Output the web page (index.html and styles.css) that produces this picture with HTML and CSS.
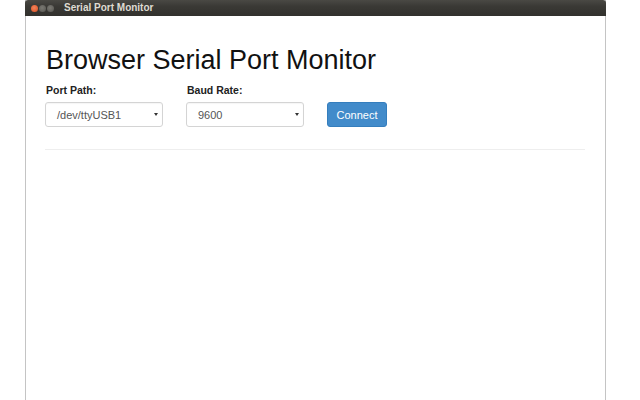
FILE: index.html
```html
<!DOCTYPE html>
<html>
<head>
<meta charset="utf-8">
<link rel="stylesheet" href="styles.css">
</head>
<body>
<div class="window">
  <div class="titlebar">
    <span class="dot dot-close"></span>
    <span class="dot"></span>
    <span class="dot"></span>
    <span class="title">Serial Port Monitor</span>
  </div>
  <div class="content">
    <h1 class="heading">Browser Serial Port Monitor</h1>
    <div class="controls">
      <div class="field">
        <label class="label">Port Path:</label>
        <div class="select"><span>/dev/ttyUSB1</span><i class="caret"></i></div>
      </div>
      <div class="field">
        <label class="label">Baud Rate:</label>
        <div class="select"><span>9600</span><i class="caret"></i></div>
      </div>
      <button class="btn">Connect</button>
    </div>
    <hr class="rule">
  </div>
</div>
</body>
</html>
```
FILE: styles.css
```css
html, body {
  margin: 0;
  padding: 0;
  background: #fff;
  font-family: "Liberation Sans", Arial, sans-serif;
}
.window {
  margin-left: 25px;
  width: 581px;
  height: 400px;
  box-sizing: border-box;
  border-left: 1px solid #c4c4c4;
  border-right: 1px solid #c4c4c4;
}
.titlebar {
  height: 16px;
  margin: 0 -1px;
  background: linear-gradient(#4a4944, #3a3935 40%, #32312d);
  border-radius: 3px 3px 0 0;
  display: flex;
  align-items: center;
  padding-left: 6px;
}
.dot {
  width: 7px;
  height: 7px;
  border-radius: 50%;
  background: radial-gradient(circle at 45% 40%, #7a7973, #55544f);
  margin-right: 1px;
}
.dot-close {
  background: radial-gradient(circle at 45% 40%, #f2835a, #d94f23);
}
.title {
  margin-left: 9px;
  color: #dfdbd2;
  font-weight: bold;
  font-size: 10px;
  line-height: 16px;
}
.content {
  padding: 0 20px 0 19px;
}
.heading {
  margin: 29px 0 0 1px;
  font-size: 27px;
  line-height: 30px;
  font-weight: normal;
  color: #111;
}
.controls {
  display: flex;
  align-items: flex-end;
  gap: 23px;
  margin-top: 8px;
}
.field {
  display: flex;
  flex-direction: column;
}
.label {
  font-size: 10.5px;
  font-weight: bold;
  line-height: 15px;
  color: #222;
  margin: 0 0 4px 1px;
}
.select {
  width: 118px;
  height: 25px;
  box-sizing: border-box;
  border: 1px solid #d4d4d4;
  border-radius: 3px;
  box-shadow: inset 0 1px 1px rgba(0,0,0,0.04);
  display: flex;
  align-items: center;
  justify-content: space-between;
  padding: 0 4px 0 11px;
  font-size: 11px;
  color: #555;
}
.caret {
  width: 0;
  height: 0;
  border-left: 2px solid transparent;
  border-right: 2px solid transparent;
  border-top: 3px solid #333;
}
.btn {
  width: 60px;
  height: 25px;
  box-sizing: border-box;
  background: #428bca;
  border: 1px solid #357ebd;
  border-radius: 3px;
  color: #fff;
  font-family: "Liberation Sans", Arial, sans-serif;
  font-size: 11px;
  padding: 0;
}
.rule {
  margin: 22px 0 0 0;
  border: 0;
  border-top: 1px solid #eee;
}
```
